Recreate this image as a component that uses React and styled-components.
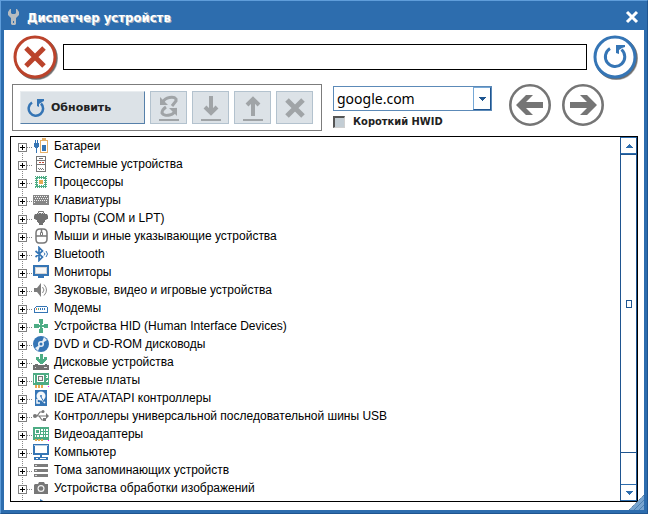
import React, { useState } from "react";
import styled, { createGlobalStyle } from "styled-components";

const blue = "#2d6dae";
const deep = "#1f5590";
const iconBlue = "#3575b5";
const green = "#4dac84";

const GlobalStyle = createGlobalStyle`
  *, *::before, *::after { box-sizing: border-box; }
  html, body, #root { margin: 0; height: 100%; }
  body { font-family: "Liberation Sans", Arial, sans-serif; font-size: 12px; color: #000; overflow: hidden; }
  button, input, select { font: inherit; color: inherit; }
  button { padding: 0; border: 0; background: none; }
  svg { display: block; flex: none; }
`;

const Frame = styled.main`
  position: relative;
  display: flex;
  flex-direction: column;
  height: 100%;
  padding: 0 3px 3px;
  border: 1px solid #5f9dda;
  border-right-color: ${deep};
  border-bottom-color: ${deep};
  background: ${blue};
`;

const TitleBar = styled.header`
  display: flex;
  align-items: center;
  height: 29px;
  padding: 3px 5px 0 4px;
  flex: none;
`;

const Title = styled.h1`
  flex: 1;
  margin: 0 0 0 7px;
  font: bold 13px "DejaVu Sans Condensed", "DejaVu Sans", sans-serif;
  color: #fff;
  text-shadow: 1px 1px #a9b4bf;
  white-space: nowrap;
`;

const CloseButton = styled.button`
  width: 14px;
  height: 14px;
`;

const Content = styled.div`
  flex: 1;
  min-height: 0;
  display: flex;
  flex-direction: column;
  padding: 4px 6px 8px;
  background: #fff;
`;

const SearchRow = styled.div`
  display: flex;
  align-items: center;
  gap: 5px;
  height: 46px;
  margin-bottom: 4px;
  padding-left: 2px;
  flex: none;
`;

const SearchInput = styled.input`
  flex: 1;
  min-width: 0;
  height: 26px;
  padding: 0 4px;
  border: 1px solid #000;
  border-radius: 0;
  background: #fff;
  outline: none;
`;

const IconButton = styled.button`
  display: block;
  flex: none;
`;

const ToolRow = styled.div`
  display: flex;
  align-items: flex-start;
  gap: 11px;
  height: 52px;
  padding-left: 2px;
  flex: none;
`;

const ToolGroup = styled.div`
  display: flex;
  gap: 5px;
  height: 47px;
  padding: 6px 8px 6px 7px;
  border: 1px solid #7c7c7c;
`;

const RefreshButton = styled.button`
  display: flex;
  align-items: center;
  gap: 6px;
  width: 125px;
  height: 33px;
  padding-left: 6px;
  background: #dce2e7;
  border: 1px solid #e9edf0;
  border-right-color: #5680aa;
  border-bottom-color: #5680aa;
  font: bold 11px "DejaVu Sans", sans-serif;
  color: #222;
`;

const SmallButton = styled.button`
  display: grid;
  place-items: center;
  width: 37px;
  height: 33px;
  background: #dce2e7;
  border: 1px solid #b3c2ce;
`;

const Options = styled.div`
  display: flex;
  flex-direction: column;
  gap: 4px;
  width: 159px;
  padding-top: 2px;
`;

const SelectBox = styled.div`
  display: grid;
  grid-template-columns: 1fr 18px;
  height: 25px;
  border: 1px solid #5c8ab8;
`;

const Select = styled.select`
  grid-area: 1 / 1 / 2 / 3;
  min-width: 0;
  padding: 0 20px 0 3px;
  border: 0;
  border-radius: 0;
  appearance: none;
  background: #fff;
  outline: none;
  font: 14px "Noto Sans", sans-serif;
`;

const SelectArrow = styled.span`
  grid-area: 1 / 2;
  z-index: 1;
  display: grid;
  place-items: center;
  border: 1px solid #76a8d6;
  border-right-color: ${deep};
  border-bottom-color: ${deep};
  pointer-events: none;
`;

const CheckLabel = styled.label`
  display: flex;
  align-items: center;
  gap: 8px;
  font: bold 11px "DejaVu Sans Condensed", "DejaVu Sans", sans-serif;
  color: #222;
  white-space: nowrap;
`;

const CheckBox = styled.input`
  appearance: none;
  width: 12px;
  height: 12px;
  margin: 0;
  border: 1px solid #d0d0d0;
  border-top: 2px solid #555;
  border-left: 2px solid #555;
  background: #c3cdd4;
  &:checked { background: ${blue}; }
`;

const NavButtons = styled.div`
  display: flex;
  gap: 11px;
  padding-left: 6px;
`;

const ListPanel = styled.section`
  flex: 1;
  min-height: 0;
  display: flex;
  border: 1px solid #000;
`;

const Tree = styled.ul`
  flex: 1;
  min-width: 0;
  margin: 0;
  padding: 0 0 0 7px;
  list-style: none;
  overflow: hidden;
`;

const TreeRow = styled.li`
  display: flex;
  align-items: center;
  height: 18px;
  white-space: nowrap;
`;

const Expander = styled.button`
  flex: none;
  width: 15px;
  height: 18px;
`;

const Label = styled.span`
  margin-left: 5px;
  line-height: 18px;
`;

const ScrollBar = styled.div`
  display: flex;
  flex-direction: column;
  width: 17px;
  flex: none;
  border: solid ${deep};
  border-width: 0 1px;
`;

const ScrollButton = styled.button`
  display: grid;
  place-items: center;
  height: 17px;
  flex: none;
  border: solid ${blue};
  border-width: 1px 0;
`;

const Thumb = styled.div`
  flex: 299;
  display: grid;
  place-items: center;
  border: solid ${deep};
  border-width: 1px 0;
`;

const Grip = styled.span`
  width: 6px;
  height: 8px;
  border: 1px solid ${deep};
`;

const Track = styled.div`
  flex: 31;
`;

const ResizeGrip = styled.span`
  position: absolute;
  right: 3px;
  bottom: 3px;
`;

const Pixel = ({ children }) => (
  <svg width="16" height="16" viewBox="0 0 16 16" shapeRendering="crispEdges" aria-hidden="true">{children}</svg>
);
const Smooth = ({ children }) => (
  <svg width="16" height="16" viewBox="0 0 16 16" aria-hidden="true">{children}</svg>
);

const icons = {
  battery: (
    <Pixel>
      <path fill={iconBlue} d="M2 2h1v3h1V2h1v3h1v4H5v1H4v5H3v-5H2V9H1V5h1z" />
      <path fill="#e6b068" d="M7 2h2V0h4v2h2v13H7zM8 3v11h6V3z" fillRule="evenodd" />
      <path fill={iconBlue} d="M9 7h4v6H9z" />
    </Pixel>
  ),
  system: (
    <Pixel>
      <path fill="#747474" fillRule="evenodd" d="M3 0h10v16H3zM4 1v14h8V1z" />
      <path fill="#747474" d="M4 4h8v1H4zM4 8h8v1H4zM6 2h4v1H6zM5 12h1v1H5zM7 12h1v1H7zM9 12h1v1H9zM6 13h1v1H6zM8 13h1v1H8zM10 13h1v1h-1z" />
      <path fill="#c34530" d="M9 6h2v1H9zM6 6h2v1H6z" />
    </Pixel>
  ),
  cpu: (
    <Pixel>
      <path fill={green} fillRule="evenodd" d="M3 3h10v10H3zM4 4v8h8V4z" />
      <path fill="none" stroke={green} strokeDasharray="1 1" d="M2 2.500h12M2 13.500h12M2.500 2v12M13.500 2v12M4 4.500h8M4 11.500h8M4.500 4v8M11.500 4v8" />
      <path fill="#e6a951" d="M6 6h4v4H6z" />
    </Pixel>
  ),
  keyboard: (
    <Pixel>
      <path fill="#858585" d="M0 3h16v10H0z" />
      <path stroke="#f2f2f2" strokeDasharray="1 1" d="M1 4.500h14M2 6.500h13M1 8.500h14M1 10.500h2M13 10.500h2" />
    </Pixel>
  ),
  port: (
    <Smooth>
      <path fill="none" stroke="#777" d="M5.500 4V1.500h5V4" />
      <path fill="#707070" d="M4 3h8v1h2l1 2v3h-1l-1 1h-1v2h-1v1h-1v2H6v-2H5v-1H4v-2H3L2 9H1V6l1-2h2z" />
      <path fill="#c8c8c8" d="M5 3h1v1H5zM8 3h1v1H8zM10 3h1v1h-1z" />
    </Smooth>
  ),
  mouse: (
    <Smooth>
      <path fill="none" stroke="#777" strokeWidth="1.500" d="M7 1h3c3 0 4 2 4 4v6c0 3-2 4-4 4H6c-2 0-3-1-3-4V5c0-2 1-4 4-4zM3 8h11M8.500 1v3" />
      <path fill="#fff" stroke="#777" d="M7.500 4.500h2v3h-2z" />
    </Smooth>
  ),
  bluetooth: (
    <Smooth>
      <path fill="none" stroke={iconBlue} strokeWidth="1.700" d="M2.500 5l7 6-3.500 3.500v-13L9.500 5l-7 6" />
      <path fill="none" stroke={iconBlue} d="M11 6.500l1 1.500-1 1.500M13 5l1.500 3-1.500 3" />
    </Smooth>
  ),
  monitor: (
    <Pixel>
      <path fill={iconBlue} d="M0 1h16v11h-5v2H5v-2H0z" />
      <path fill="#d6d6d6" d="M2 3h12v7H2z" /><path fill="#f8f8f8" d="M3 4h10v5H3z" />
    </Pixel>
  ),
  sound: (
    <Smooth>
      <path fill="#7c7c7c" d="M1 6h3l4-5v14l-4-5H1z" />
      <path fill="none" stroke="#888" d="M9.500 5q3 3 0 6M11 2.500q5 5.500 0 11" />
    </Smooth>
  ),
  modem: (
    <Pixel>
      <path fill={iconBlue} fillRule="evenodd" d="M3 6h11v1h1v6H1V8h1V7h1zM2 8v4h12V7H3v1z" />
      <path fill={iconBlue} d="M7 8h1v2H7zM9 8h1v2H9zM11 8h1v2h-1zM14 8h1v4h-1z" />
      <path fill="#d07840" d="M3 8h1v2H3z" /><path fill={green} d="M5 8h1v2H5z" />
    </Pixel>
  ),
  hid: <Pixel><path fill={green} d="M6 1h4v4L9 6v1h1l1-1h4v4h-4l-1-1H9v1l1 1v4H6v-4l1-1V9H6l-1 1H1V6h4l1 1h1V6L6 5z" /></Pixel>,
  disc: (
    <Smooth>
      <circle cx="8" cy="8" r="8" fill={iconBlue} />
      <path fill="#e8eef4" d="M8 8L11 1l3 3zM8 8l-3 7-3-3z" />
      <circle cx="8" cy="8" r="3" fill="#e8eef4" /><circle cx="8" cy="8" r="1.500" fill={iconBlue} />
    </Smooth>
  ),
  drive: (
    <Pixel>
      <path fill={green} d="M7 0h3v5h1V3h3v3h-1v1h-1v1h-1v1h-1v1H7V9H6V8H5V7H4V6H3V3h3v2h1z" />
      <path fill="#6f6f6f" d="M2 10h3v1h7v-1h2v1h2v5H0v-5h2z" /><path fill="#ddd" d="M2 13h1v1H2zM11 13h3v1h-3z" />
    </Pixel>
  ),
  network: (
    <Pixel>
      <path fill={green} d="M0 1h16v12H0z" />
      <path fill="#fff" d="M1 3h1v8H1zM4 3h7v7H4zM13 3h2v3h-2zM13 8h2v2h-2z" />
      <path fill="#777" d="M5 4h5v5H5z" /><path fill="#eee" d="M6 5h3v3H6z" /><path fill={green} d="M13 4h1v1h-1zM13 8h1v1h-1z" />
      <path stroke="#e6a951" strokeWidth="3" strokeDasharray="2 1" d="M2 14.500h9" /><path fill="#f0f" d="M15 14h1v1h-1z" />
    </Pixel>
  ),
  ide: (
    <Smooth>
      <path fill={iconBlue} d="M2 0h12v16H2z" />
      <circle cx="8" cy="6" r="4.500" fill="#f4f7fa" /><circle cx="8" cy="6" r="1" fill={iconBlue} />
      <path fill="none" stroke="#f4f7fa" strokeWidth="1.500" d="M4 9v4h3M9 10l3 3" />
      <path stroke={iconBlue} d="M8 7l3 5" />
    </Smooth>
  ),
  usb: (
    <Smooth>
      <path fill="none" stroke="#777" strokeWidth="1.200" d="M2 8h12M4 8l3-4h3M6 8l3 4h3" />
      <circle cx="2" cy="8" r="2" fill="#777" /><circle cx="10" cy="3.500" r="1.500" fill="#777" />
      <path fill="#777" d="M10 10h3v3h-3zM13 5l3 3-3 3z" />
    </Smooth>
  ),
  video: (
    <Pixel>
      <path fill={green} d="M0 1h16v13H0z" />
      <path fill="#fff" d="M2 3h5v5H2zM8 3h2v2H8zM11 3h1v2h-1zM13 3h2v2h-2zM8 6h2v2H8zM11 6h1v2h-1zM13 6h2v2h-2zM2 9h1v2H2zM4 9h2v2H4zM7 9h3v2H7zM11 9h1v2h-1zM13 9h2v2h-2z" />
      <path fill={green} d="M3 4h3v3H3z" />
      <path stroke="#e6a951" strokeWidth="2" strokeDasharray="2 1" d="M2 14h9" /><path fill="#f0f" d="M15 14h1v1h-1z" />
    </Pixel>
  ),
  computer: (
    <Pixel>
      <path fill={iconBlue} fillRule="evenodd" d="M0 0h16v11H9v2H7v-2H0zM2 2v7h12V2zM1 13h14v3H1zM3 14v1h2v-1zM7 14v1h6v-1z" />
      <path fill="#b8cee4" d="M1 1h14v1H1z" />
    </Pixel>
  ),
  volume: (
    <Pixel>
      <path fill="#7c7c7c" d="M1 2h14v3H1zM1 7h14v3H1zM1 12h14v3H1z" />
      <path fill="#ddd" d="M2 3h2v1H2zM2 8h2v1H2zM2 13h2v1H2z" />
    </Pixel>
  ),
  camera: (
    <Smooth>
      <path fill="#777" d="M2 4h3l1-2h5l1 2h3v10H1V5z" />
      <circle cx="8" cy="8.500" r="3.500" fill="#f1f1f1" /><circle cx="8" cy="8.500" r="2.300" fill="#777" />
    </Smooth>
  ),
  portable: <Smooth><path fill={iconBlue} d="M7 1l5 3v11H7z" /></Smooth>,
};

const devices = [
  ["battery", "Батареи"],
  ["system", "Системные устройства"],
  ["cpu", "Процессоры"],
  ["keyboard", "Клавиатуры"],
  ["port", "Порты (COM и LPT)"],
  ["mouse", "Мыши и иные указывающие устройства"],
  ["bluetooth", "Bluetooth"],
  ["monitor", "Мониторы"],
  ["sound", "Звуковые, видео и игровые устройства"],
  ["modem", "Модемы"],
  ["hid", "Устройства HID (Human Interface Devices)"],
  ["disc", "DVD и CD-ROM дисководы"],
  ["drive", "Дисковые устройства"],
  ["network", "Сетевые платы"],
  ["ide", "IDE ATA/ATAPI контроллеры"],
  ["usb", "Контроллеры универсальной последовательной шины USB"],
  ["video", "Видеоадаптеры"],
  ["computer", "Компьютер"],
  ["volume", "Тома запоминающих устройств"],
  ["camera", "Устройства обработки изображений"],
  ["portable", ""],
];

const Plus = ({ first }) => (
  <svg width="15" height="18" viewBox="0 0 15 18" shapeRendering="crispEdges" aria-hidden="true">
    <path stroke="#888" strokeDasharray="1 1" d={`${first ? "" : "M4.500 0v6"}M4.500 16v2M9 10.500h6`} />
    <path fill="#fff" stroke="#808080" d="M.5 6.500h8v8h-8z" />
    <path stroke="#000" d="M2 10.500h5M4.500 8v5" />
  </svg>
);

const SmallIcon = ({ children }) => (
  <svg width="24" height="26" viewBox="0 0 24 26" fill="none" stroke="#a0a4a7" aria-hidden="true">{children}</svg>
);

const NavIcon = ({ d }) => (
  <svg width="42" height="42" viewBox="0 0 42 42" aria-hidden="true">
    <circle cx="21" cy="21" r="19.700" fill="#fff" stroke="#757575" strokeWidth="2.600" />
    <path fill="#757575" d={d} />
  </svg>
);

const RingIcon = ({ color, children }) => (
  <svg width="46" height="46" viewBox="0 0 46 46" fill="none" aria-hidden="true">
    <circle cx="24.500" cy="24.500" r="20.500" stroke="#bbb" strokeWidth="2" />
    <circle cx="24" cy="24" r="20.500" stroke="#6d6d6d" strokeWidth="2" />
    <circle cx="23" cy="23" r="20" fill="#fff" stroke={color} strokeWidth="3" />
    {children}
  </svg>
);

export default function App() {
  const [query, setQuery] = useState("");
  return (
    <>
      <GlobalStyle />
      <Frame>
        <TitleBar>
          <svg width="12" height="18" viewBox="0 0 12 18" aria-hidden="true">
            <path fill="#b7bcc0" fillRule="evenodd" d="M3 1v4l1 1h3l1-1V1h1l2 3v3L8 10v6l-1 1H4l-1-1v-6L0 7V4l2-3zM5 13v2h1v-2z" />
          </svg>
          <Title>Диспетчер устройств</Title>
          <CloseButton type="button" aria-label="Закрыть">
            <svg width="14" height="14" viewBox="0 0 14 14" stroke="#fff" strokeWidth="3" aria-hidden="true"><path d="M2 2l10 10M12 2L2 12" /></svg>
          </CloseButton>
        </TitleBar>
        <Content>
          <SearchRow>
            <IconButton type="button" aria-label="Очистить">
              <RingIcon color="#bb432b"><path stroke="#bb432b" strokeWidth="5" d="M14 14l18 18M32 14L14 32" /></RingIcon>
            </IconButton>
            <SearchInput aria-label="Поиск" value={query} onChange={(e) => setQuery(e.target.value)} />
            <IconButton type="button" aria-label="Искать">
              <RingIcon color={iconBlue}>
                <path stroke={iconBlue} strokeWidth="3" d="M18 14.500a9.700 9.700 0 1 0 11.500 1" />
                <path fill={iconBlue} d="M24 11h9v2l-3 1-3 2v4l-3-1z" />
              </RingIcon>
            </IconButton>
          </SearchRow>
          <ToolRow>
            <ToolGroup>
              <RefreshButton type="button">
                <svg width="18" height="20" viewBox="0 0 18 20" fill="none" aria-hidden="true">
                  <path stroke={iconBlue} strokeWidth="2.500" d="M5 4.500a7.200 7.200 0 1 0 9 1" />
                  <path fill={iconBlue} d="M10 1h7v2l-2 1-3 2v3l-2-1z" />
                </svg>
                Обновить
              </RefreshButton>
              <SmallButton type="button" aria-label="Обновить драйвер">
                <SmallIcon>
                  <path strokeWidth="3" d="M6 7c2-5 11-6 13-3v2l-4 5M18 13c1 8-11 9-13 5 0-3 1-4 4-6" />
                  <path fill="#a0a4a7" stroke="none" d="M3 2v8h8zM12 13h8v8zM2 24h20v2H2z" />
                </SmallIcon>
              </SmallButton>
              <SmallButton type="button" aria-label="Загрузить">
                <SmallIcon><path strokeWidth="4" d="M12 1v17" /><path strokeWidth="4" d="M6 12l6 6 6-6" /><path strokeWidth="2" d="M2 25h20" /></SmallIcon>
              </SmallButton>
              <SmallButton type="button" aria-label="Выгрузить">
                <SmallIcon><path strokeWidth="4" d="M12 4v17" /><path strokeWidth="4" d="M6 10l6-6 6 6" /><path strokeWidth="2" d="M2 25h20" /></SmallIcon>
              </SmallButton>
              <SmallButton type="button" aria-label="Удалить">
                <SmallIcon><path strokeWidth="5" d="M4 5l16 16M20 5L4 21" /></SmallIcon>
              </SmallButton>
            </ToolGroup>
            <Options>
              <SelectBox>
                <Select aria-label="Поисковая система" defaultValue="google.com">
                  <option>google.com</option>
                </Select>
                <SelectArrow>
                  <svg width="8" height="4" viewBox="0 0 8 4" shapeRendering="crispEdges" aria-hidden="true"><path fill={deep} d="M0 0h8L4 4z" /></svg>
                </SelectArrow>
              </SelectBox>
              <CheckLabel><CheckBox type="checkbox" />Короткий HWID</CheckLabel>
            </Options>
            <NavButtons>
              <IconButton type="button" aria-label="Назад">
                <NavIcon d="M7 21L17 11h7l-7 7h17v6H17l7 7h-7z" />
              </IconButton>
              <IconButton type="button" aria-label="Вперёд">
                <NavIcon d="M35 21L25 11h-7l7 7H8v6h17l-7 7h7z" />
              </IconButton>
            </NavButtons>
          </ToolRow>
          <ListPanel>
            <Tree>
              {devices.map(([icon, name], i) => (
                <TreeRow key={icon}>
                  <Expander type="button" aria-label={`Развернуть ${name}`}><Plus first={i === 0} /></Expander>
                  {icons[icon]}
                  <Label>{name}</Label>
                </TreeRow>
              ))}
            </Tree>
            <ScrollBar>
              <ScrollButton type="button" aria-label="Вверх">
                <svg width="8" height="4" viewBox="0 0 8 4" shapeRendering="crispEdges"><path fill={blue} d="M0 4h8L4 0z" /></svg>
              </ScrollButton>
              <Thumb><Grip /></Thumb>
              <Track />
              <ScrollButton type="button" aria-label="Вниз">
                <svg width="8" height="4" viewBox="0 0 8 4" shapeRendering="crispEdges"><path fill={blue} d="M0 0h8L4 4z" /></svg>
              </ScrollButton>
            </ScrollBar>
          </ListPanel>
        </Content>
        <ResizeGrip>
          <svg width="15" height="15" viewBox="0 0 15 15" aria-hidden="true">
            <path fill="#77a4cf" d="M15 0v15H0z" /><path stroke="#4d80b1" d="M15 5L5 15M15 10l-5 5" /><path stroke="#335f88" strokeDasharray="1 1" d="M15 0L0 15" />
          </svg>
        </ResizeGrip>
      </Frame>
    </>
  );
}
